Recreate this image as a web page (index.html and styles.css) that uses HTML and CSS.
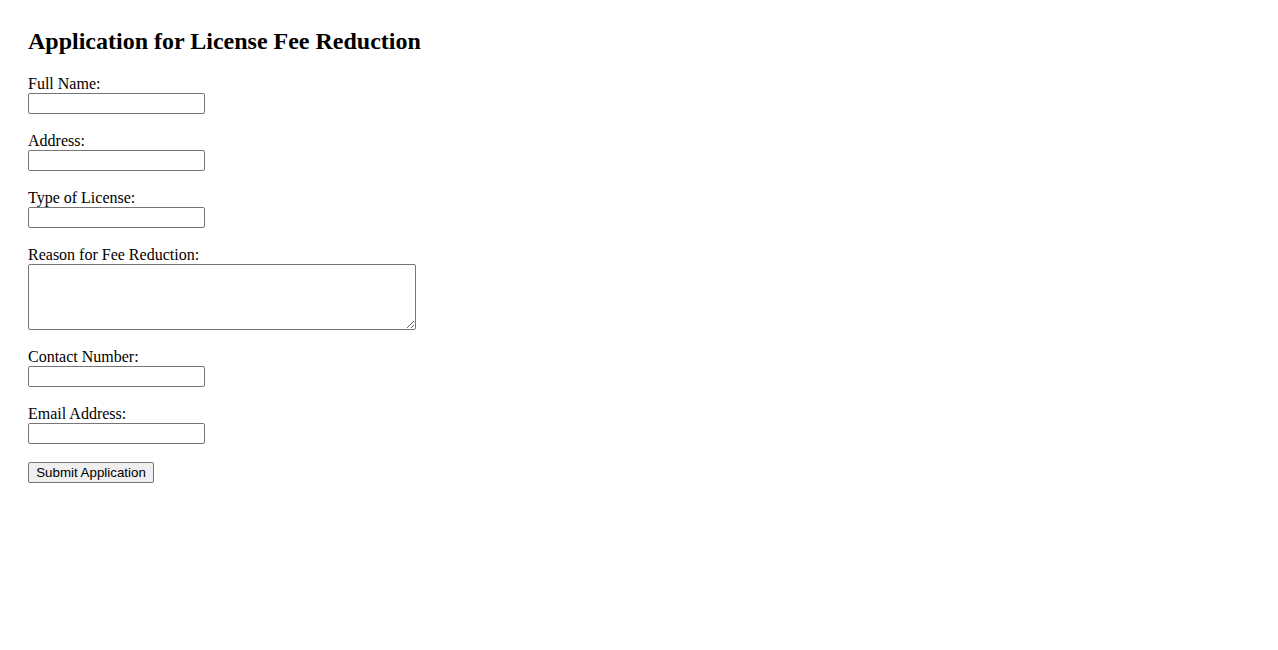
FILE: index.html
```html
<!DOCTYPE html>
<html>
<head>
<meta charset="utf-8">
<title>Application for License Fee Reduction</title>
<link rel="stylesheet" href="styles.css">
</head>
<body>
<div class="page">
  <h2 class="title">Application for License Fee Reduction</h2>
  <form class="form">
    <div class="field">
      <label class="label" for="name">Full Name:</label>
      <input class="input" type="text" id="name">
    </div>
    <div class="field">
      <label class="label" for="address">Address:</label>
      <input class="input" type="text" id="address">
    </div>
    <div class="field">
      <label class="label" for="type">Type of License:</label>
      <input class="input" type="text" id="type">
    </div>
    <div class="field">
      <label class="label" for="reason">Reason for Fee Reduction:</label>
      <textarea class="textarea" id="reason"></textarea>
    </div>
    <div class="field">
      <label class="label" for="contact">Contact Number:</label>
      <input class="input" type="text" id="contact">
    </div>
    <div class="field">
      <label class="label" for="email">Email Address:</label>
      <input class="input" type="text" id="email">
    </div>
    <div class="field">
      <button class="button" type="button">Submit Application</button>
    </div>
  </form>
</div>
</body>
</html>
```

FILE: styles.css
```css
html, body {
  margin: 0;
  padding: 0;
  background: #ffffff;
}

.page {
  padding: 28px;
  font-family: "Liberation Serif", "Times New Roman", serif;
  font-size: 16px;
  color: #000000;
}

.title {
  margin: 0 0 20px 0;
  font-size: 24px;
  font-weight: bold;
  line-height: 27px;
}

.form {
  display: flex;
  flex-direction: column;
  gap: 18px;
  margin: 0;
}

.field {
  display: flex;
  flex-direction: column;
  align-items: flex-start;
}

.label {
  line-height: 18px;
  height: 18px;
}

.input {
  box-sizing: border-box;
  width: 177px;
  height: 21px;
  margin: 0;
  padding: 1px 2px;
  border: 1px solid #767676;
  border-radius: 2px;
  background: #ffffff;
  font-family: "Liberation Sans", Arial, sans-serif;
  font-size: 13.33px;
}

.textarea {
  box-sizing: border-box;
  width: 388px;
  height: 66px;
  margin: 0;
  padding: 2px;
  border: 1px solid #767676;
  border-radius: 2px;
  background: #ffffff;
  font-family: "Liberation Mono", monospace;
  font-size: 13.33px;
  resize: both;
}

.button {
  box-sizing: border-box;
  height: 21px;
  width: 126px;
  margin: 0;
  padding: 1px 6px;
  border: 1px solid #767676;
  border-radius: 2px;
  background: #efefef;
  color: #000000;
  font-family: "Liberation Sans", Arial, sans-serif;
  font-size: 13.33px;
  line-height: 17px;
}
```
